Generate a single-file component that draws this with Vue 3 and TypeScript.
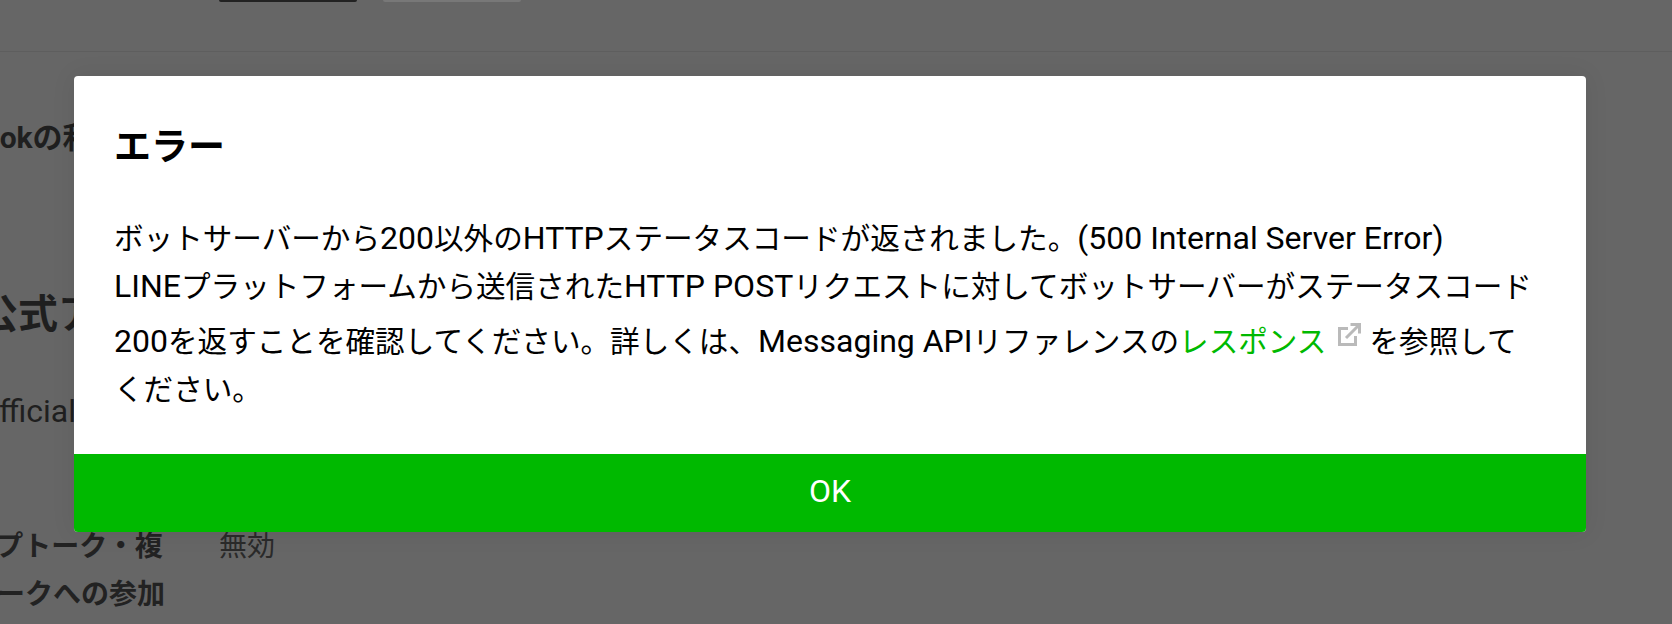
<script setup lang="ts">
const title = 'エラー'
</script>

<template>
  <div class="page">
    <header class="top">
      <span class="btn dark"></span>
      <span class="btn grey"></span>
    </header>
    <main class="content">
      <p class="clip-a">Facebookの利用</p>
      <h2 class="clip-b">LINE公式アカウント</h2>
      <p class="clip-c">LINE Official</p>
      <div class="row">
        <div class="label">グループトーク・複<br />数人トークへの参加</div>
        <div class="value">無効</div>
      </div>
    </main>
    <div class="modal">
      <div class="modal-body">
        <h1>{{ title }}</h1>
        <p>ボットサーバーから<span class="la">200</span>以外の<span class="la">HTTP</span>ステータスコードが返されました。<span class="la">(500 Internal Server Error)</span><br /><span class="la">LINE</span>プラットフォームから送信された<span class="la">HTTP POST</span>リクエストに対してボットサーバーがステータスコード<span class="la">200</span>を返すことを確認してください。詳しくは、<span class="la">Messaging API</span>リファレンスの<a class="link">レスポンス</a><svg class="ext" viewBox="0 0 24 24" fill="none" stroke="#bababa" stroke-width="3"><path d="M11 5.5H2.5v16h16V13" /><path d="M9 15 22 2" /><path d="M13.5 1.5h9v9" /></svg>を参照してください。</p>
      </div>
      <button class="ok">OK</button>
    </div>
  </div>
</template>

<style>
html, body { margin: 0; background: #666; }
</style>

<style scoped>
.page {
  position: relative;
  width: 1672px;
  height: 624px;
  overflow: hidden;
  background: #666;
  font-family: Roboto, "Noto Sans CJK JP", sans-serif;
  color: #1f1f1f;
}
.top {
  height: 51px;
  border-bottom: 1px solid #5e5e5e;
  display: flex;
  align-items: flex-start;
  gap: 26px;
  padding-left: 219px;
}
.btn { width: 138px; height: 2px; border-radius: 0 0 3px 3px; display: block; }
.btn.dark { background: #222; }
.btn.grey { background: #787878; }
.content { display: flex; flex-direction: column; }
.clip-a { margin: 67px 0 0 -98px; font-size: 30px; line-height: 38px; font-weight: 700; white-space: nowrap; }
.clip-b { margin: 135px 0 0 -106px; font-size: 40px; line-height: 46px; font-weight: 700; white-space: nowrap; }
.clip-c { margin: 52px 0 0 -98px; font-size: 32px; line-height: 42px; white-space: nowrap; }
.row { display: flex; margin: 91px 0 0 -87px; gap: 56px; font-size: 28px; line-height: 48px; }
.label { font-weight: 700; width: 250px; white-space: nowrap; color: #222; }
.value { color: #2a2a2a; }
.modal {
  position: absolute;
  left: 74px;
  top: 76px;
  width: 1512px;
  height: 456px;
  border-radius: 4px;
  overflow: hidden;
  background: #fff;
  box-shadow: 0 0 24px rgba(0, 0, 0, 0.08);
  display: flex;
  flex-direction: column;
}
.modal-body { flex: 1; padding: 46px 44px 0 40px; color: #000; }
h1 { margin: 0; font-size: 37px; line-height: 52px; font-weight: 700; }
.modal-body p { margin: 42px 0 0; font-size: 29.6px; line-height: 47.5px; }
.la { font-size: 32px; line-height: 1; }
.link { color: #00b900; }
.ext { width: 24px; height: 24px; margin: 12px 8px 0 11px; vertical-align: 5px; }
.ok {
  height: 78px;
  border: 0;
  background: #00b900;
  color: #fff;
  font: 400 32px Roboto, "Noto Sans CJK JP", sans-serif;
  padding: 0 0 4px;
}
</style>
